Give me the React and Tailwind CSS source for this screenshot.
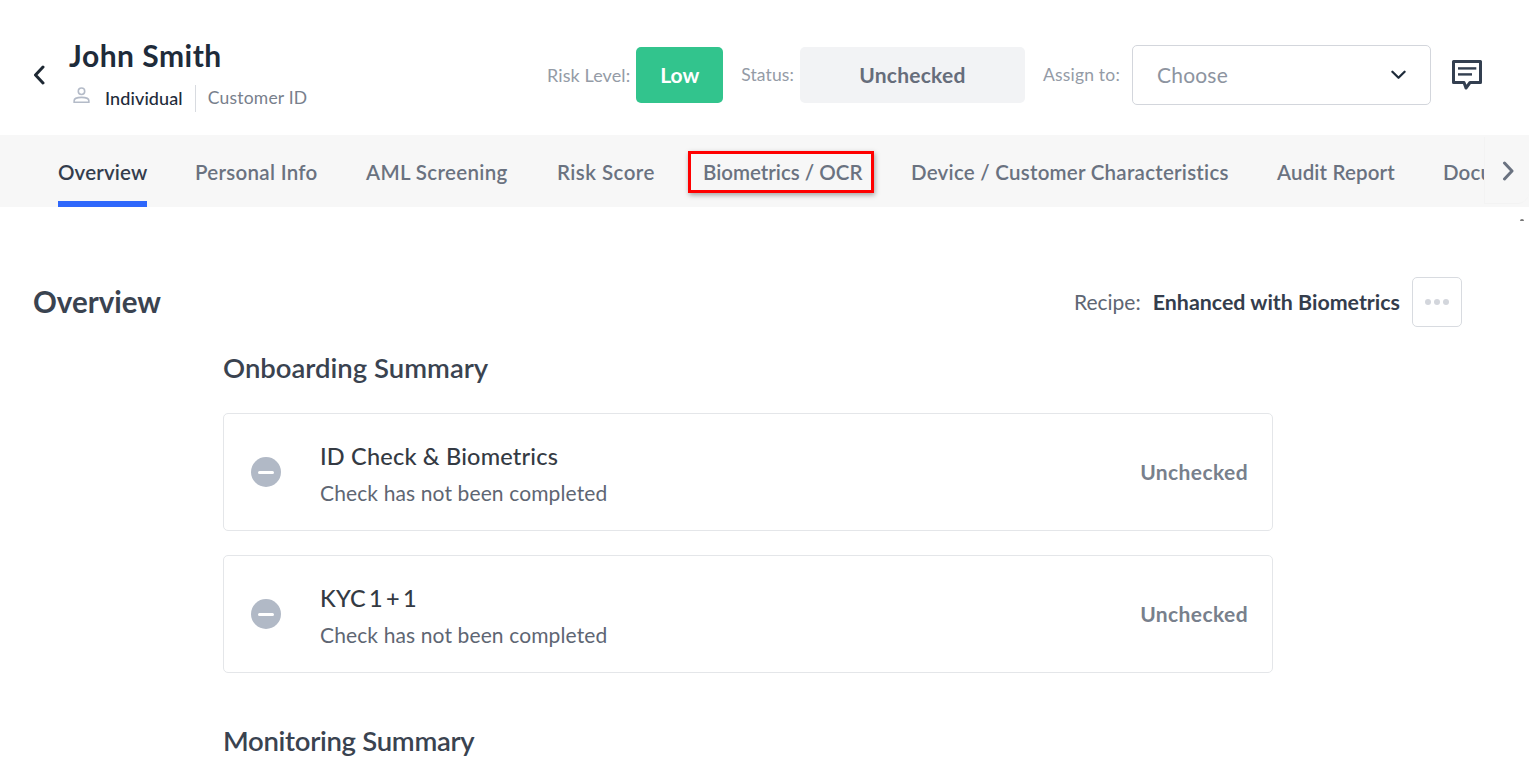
import React from "react";

const font = { fontFamily: '"Lato", "Liberation Sans", sans-serif' };

function Chevron({ className, d = "M10 3 L2.5 11 L10 19", w = "3" }) {
  return (
    <svg viewBox="0 0 12 22" className={className} fill="none" stroke="currentColor" strokeWidth={w} strokeLinecap="round" strokeLinejoin="round">
      <path d={d} />
    </svg>
  );
}

const tabs = [
  ["Overview", "w-[89px]", "tracking-[0.15px]"],
  ["Personal Info", "w-[123px]", "tracking-[0.3px]"],
  ["AML Screening", "w-[143px]", "tracking-[0.35px]"],
  ["Risk Score", "w-[98px]", "tracking-[0.45px]"],
  ["Biometrics / OCR", "w-[160px]", "tracking-[0px]"],
  ["Device / Customer Characteristics", "w-[318px]", "tracking-[0.25px]"],
  ["Audit Report", "w-[118px]", "tracking-[0.15px]"],
  ["Documents", "w-[100px]", "tracking-[0.15px]"],
];

function Card({ title, titleClass = "" }) {
  return (
    <div className="h-[118px] w-[1050px] rounded-[5px] border border-[#e4e6e9] bg-white flex items-center pl-[27px] pr-[24px]">
      <div className="w-[30px] h-[30px] rounded-full bg-[#b1b9c6] flex items-center justify-center shrink-0">
        <div className="w-[16px] h-[3px] rounded-[2px] bg-white" />
      </div>
      <div className="ml-[39px] flex-1 pt-[3px]">
        <div className={`text-[23.5px] leading-[30px] font-medium text-[#343a43] tracking-[0.2px] ${titleClass}`}>{title}</div>
        <div className="mt-[9px] text-[21px] leading-[26px] text-[#5e6673] tracking-[0.12px]">Check has not been completed</div>
      </div>
      <div className="text-[21px] font-bold text-[#78808c] tracking-[0.4px]">Unchecked</div>
    </div>
  );
}

export default function App() {
  return (
    <div style={font} className="w-[1529px] h-[780px] overflow-hidden bg-white relative">
      {/* Header */}
      <header className="h-[135px] flex items-center pl-[33px] pr-[47px]">
        <Chevron className="w-[12px] h-[22px] text-[#1e2833] mt-[14px]" />
        <div className="ml-[24px] flex flex-col mt-[14px]">
          <div className="text-[30px] leading-[36px] font-bold text-[#1e2b3a] tracking-[0.5px]">John Smith</div>
          <div className="flex items-center h-[28px] mt-[12px] ml-[4px]">
            <svg viewBox="0 0 18 18" className="w-[17px] h-[17px] text-[#b4bbc8] -mt-[6px]" fill="none" stroke="currentColor" strokeWidth="1.7">
              <circle cx="9" cy="4.5" r="3.4" />
              <path d="M1.2 16.2v-1.6c0-2.3 3.6-3.6 7.8-3.6s7.8 1.3 7.8 3.6v1.6z" />
            </svg>
            <span className="ml-[15px] text-[18px] font-medium text-[#1e2b3a] tracking-[0.1px]">Individual</span>
            <div className="ml-[12px] w-px h-[27px] bg-[#d8dbe0]" />
            <span className="ml-[12px] text-[17.5px] text-[#78808c] tracking-[0.2px]">Customer ID</span>
          </div>
        </div>

        <div className="ml-auto flex items-center mt-[14px]">
          <span className="mt-[1px] text-[18px] text-[#949ba6] tracking-[0.1px]">Risk Level:</span>
          <div className="ml-[6px] w-[87px] h-[56px] rounded-[5px] bg-[#32c48d] flex items-center justify-center text-white text-[21px] font-bold">Low</div>
          <span className="mt-[1px] ml-[18px] text-[17.5px] text-[#949ba6] tracking-[0.1px]">Status:</span>
          <div className="ml-[6px] w-[225px] h-[56px] rounded-[5px] bg-[#f2f3f5] flex items-center justify-center text-[#666d7b] text-[21px] font-bold tracking-[0.25px]">Unchecked</div>
          <span className="mt-[1px] ml-[18px] text-[17.5px] text-[#949ba6] tracking-[0.2px]">Assign to:</span>
          <div className="ml-[12px] w-[299px] h-[60px] rounded-[5px] border border-[#d3d6dc] flex items-center justify-between pl-[24px] pr-[24px]">
            <span className="mt-[1px] text-[21px] text-[#8d94a0] tracking-[0.2px]">Choose</span>
            <svg viewBox="0 0 16 10" className="w-[15px] h-[10px] text-[#1e2b3a]" fill="none" stroke="currentColor" strokeWidth="2.4" strokeLinecap="round" strokeLinejoin="round">
              <path d="M1.5 1.5 L8 8 L14.5 1.5" />
            </svg>
          </div>
          <svg viewBox="0 0 30 30" className="ml-[21px] w-[30px] h-[30px] text-[#333f50]" fill="none">
            <path d="M1.5 1.5h27v21H18l-4 5.5-2-5.5H1.5z" stroke="currentColor" strokeWidth="3" strokeLinejoin="round" />
            <rect x="6" y="7.2" width="18.3" height="2.4" fill="currentColor" />
            <rect x="6" y="13.2" width="14" height="2.4" fill="currentColor" />
          </svg>
        </div>
      </header>

      {/* Tabs */}
      <nav className="relative h-[72px] bg-[#f7f7f7] overflow-hidden">
        <div className="flex gap-[48px] pl-[58px] h-full">
          {tabs.map(([t, w, tr], i) => (
            <div key={t} className={`relative h-full shrink-0 flex items-center whitespace-nowrap text-[20.5px] font-semibold ${w} ${i === 0 ? "text-[#343d4c]" : "text-[#6a7280]"}`}>
              <span className={`mt-[2px] ${tr}`}>{t}</span>
              {i === 0 && <div className="absolute left-0 right-0 bottom-0 h-[6px] bg-[#2e67fb]" />}
              {i === 4 && <div className="absolute -left-[15px] -right-[11px] top-[16px] h-[42px] border-[3px] border-[#ff0000] shadow-[1px_2px_5px_rgba(0,0,0,0.35)]" />}
            </div>
          ))}
        </div>
        <div className="absolute right-0 top-[2px] w-[45px] h-[67px] bg-[#f7f7f7] rounded-r-[12px] border-l border-b border-[#f3f3f3] flex items-center justify-center pl-[2px] text-[#6a7280]">
          <Chevron className="w-[12px] h-[22px] mt-[2px]" d="M2.5 3 L10 11 L2.5 19" />
        </div>
      </nav>

      {/* Content */}
      <main className="relative">
        <div className="absolute right-[5px] top-[12px] w-[4px] h-[2px] bg-[#777] rounded-t-full" />
        <div className="flex items-center justify-between pl-[33px] pr-[67px] pt-[70px]">
          <h1 className="text-[29.5px] leading-[50px] font-bold text-[#3a4350]">Overview</h1>
          <div className="flex items-center">
            <span className="text-[21px] text-[#5e6673]">Recipe:</span>
            <span className="ml-[12px] text-[21.4px] font-bold text-[#343d4c]">Enhanced with Biometrics</span>
            <div className="ml-[12px] w-[50px] h-[50px] rounded-[5px] border border-[#d8dbe0] flex items-center justify-center gap-[3px]">
              <div className="w-[6px] h-[6px] rounded-full bg-[#d3d6dc]" />
              <div className="w-[6px] h-[6px] rounded-full bg-[#d3d6dc]" />
              <div className="w-[6px] h-[6px] rounded-full bg-[#d3d6dc]" />
            </div>
          </div>
        </div>
        <div className="ml-[223px]">
          <h2 className="mt-[24px] text-[27.5px] leading-[34px] font-semibold text-[#3a4350]">Onboarding Summary</h2>
          <div className="mt-[28px] flex flex-col gap-[24px]">
            <Card title="ID Check & Biometrics" />
            <Card title="KYC 1 + 1" titleClass="[word-spacing:-3px]" />
          </div>
          <h2 className="mt-[51px] text-[27.5px] leading-[34px] font-semibold text-[#3a4350] tracking-[-0.3px]">Monitoring Summary</h2>
        </div>
      </main>
    </div>
  );
}
